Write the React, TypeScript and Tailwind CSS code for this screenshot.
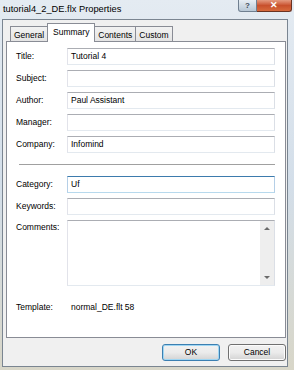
import React from "react";

const inputCls =
  "h-[17px] w-[208px] border border-t-[#abadb3] border-l-[#e2e3ea] border-r-[#dbdfe6] border-b-[#e3e9ef] bg-white px-[3px] flex items-center";

function Field({ label, value, focus }: { label: string; value?: string; focus?: boolean }) {
  return (
    <div className="flex items-center">
      <span className="w-[51px]">{label}</span>
      <div
        className={
          focus
            ? "h-[17px] w-[208px] border border-t-[#3d7bad] border-l-[#b5cfe7] border-r-[#b5cfe7] border-b-[#b7d9ed] bg-white px-[3px] flex items-center"
            : inputCls
        }
      >
        {value}
      </div>
    </div>
  );
}

function Tab({ label, active }: { label: string; active?: boolean }) {
  if (active)
    return (
      <div className="relative z-10 -ml-px h-[19px] w-[48px] border border-b-0 border-[#898c95] bg-white pt-[2px] text-center">
        {label}
      </div>
    );
  return (
    <div className="-ml-px h-[16px] border border-b-0 border-[#898c95] bg-gradient-to-b from-[#f2f2f2] to-[#e3e3e3] px-[3px] pt-[2px] text-center first:ml-0">
      {label}
    </div>
  );
}

function Btn({ label, primary }: { label: string; primary?: boolean }) {
  return (
    <div
      className={
        "flex h-[17px] w-[58px] items-center justify-center rounded-[3px] border bg-gradient-to-b from-[#f2f2f2] via-[#ebebeb] to-[#d3d3d3] " +
        (primary
          ? "border-[#3c7fb1] shadow-[inset_0_0_0_1px_#9fd6f3]"
          : "border-[#707070] shadow-[inset_0_0_0_1px_#fcfcfc]")
      }
    >
      {label}
    </div>
  );
}

export default function App() {
  return (
    <div className="flex h-[370px] w-[294px] flex-col overflow-hidden bg-gradient-to-b from-[#e4ebf2] via-[#d3dee9] to-[#d8d6c8] font-['Liberation_Sans',Arial,sans-serif] text-[8.5px] text-black">
      {/* title bar */}
      <div className="flex h-[19px] items-start justify-between">
        <span className="pl-[3px] pt-[3px] text-[9.3px]">tutorial4_2_DE.flx Properties</span>
        <div className="mr-[2px] flex">
          <div className="flex h-[12px] w-[19px] items-center justify-center rounded-bl-[3px] border border-t-0 border-[#6f7f90] bg-gradient-to-b from-[#e8eef4] to-[#b8c8d6] text-[8px] font-bold text-[#3d4a57]">
            ?
          </div>
          <div className="flex h-[12px] w-[35px] items-center justify-center rounded-br-[3px] border border-l-0 border-t-0 border-[#6b3322] bg-gradient-to-b from-[#e49a80] via-[#c8502c] to-[#d76a3c] text-[9px] font-bold text-white">
            ✕
          </div>
        </div>
      </div>

      {/* client area */}
      <div className="ml-[2px] mb-[3px] flex h-[348px] w-[286px] flex-col border border-[#7a8591] bg-[#f0f0f0]">
        <div className="ml-[3px] mr-[1px] mt-[3px] flex flex-col">
          <div className="-mb-px flex h-[19px] items-end pl-[4px]">
            <Tab label="General" />
            <Tab label="Summary" active />
            <Tab label="Contents" />
            <Tab label="Custom" />
          </div>
          <div className="flex h-[297px] flex-col border border-[#898c95] bg-white pl-[9px] pr-[9px] pt-[6px]">
            <div className="flex flex-col gap-[5px]">
              <Field label="Title:" value="Tutorial 4" />
              <Field label="Subject:" />
              <Field label="Author:" value="Paul Assistant" />
              <Field label="Manager:" />
              <Field label="Company:" value="Infomind" />
            </div>
            <div className="ml-[3px] mr-[1px] mt-[11px] mb-[11px] h-px bg-[#a0a0a0]" />
            <div className="flex flex-col gap-[5px]">
              <Field label="Category:" value="Uf" focus />
              <Field label="Keywords:" />
              <div className="flex items-start">
                <span className="w-[51px] pt-[1px]">Comments:</span>
                <div className="flex h-[66px] w-[208px] justify-end border border-t-[#abadb3] border-l-[#e2e3ea] border-r-[#dbdfe6] border-b-[#e3e9ef] bg-white">
                  <div className="flex w-[14px] flex-col items-center justify-between bg-[#eeeeee] py-[6px]">
                    <div className="h-0 w-0 border-x-[3px] border-b-[3px] border-x-transparent border-b-[#6a6a6a]" />
                    <div className="h-0 w-0 border-x-[3px] border-t-[3px] border-x-transparent border-t-[#6a6a6a]" />
                  </div>
                </div>
              </div>
            </div>
            <div className="mt-[15px] flex items-center">
              <span className="w-[55px]">Template:</span>
              <span>normal_DE.flt 58</span>
            </div>
          </div>
        </div>
        <div className="mr-[1px] mt-[6px] flex justify-end gap-[8px]">
          <Btn label="OK" primary />
          <Btn label="Cancel" />
        </div>
      </div>
    </div>
  );
}
